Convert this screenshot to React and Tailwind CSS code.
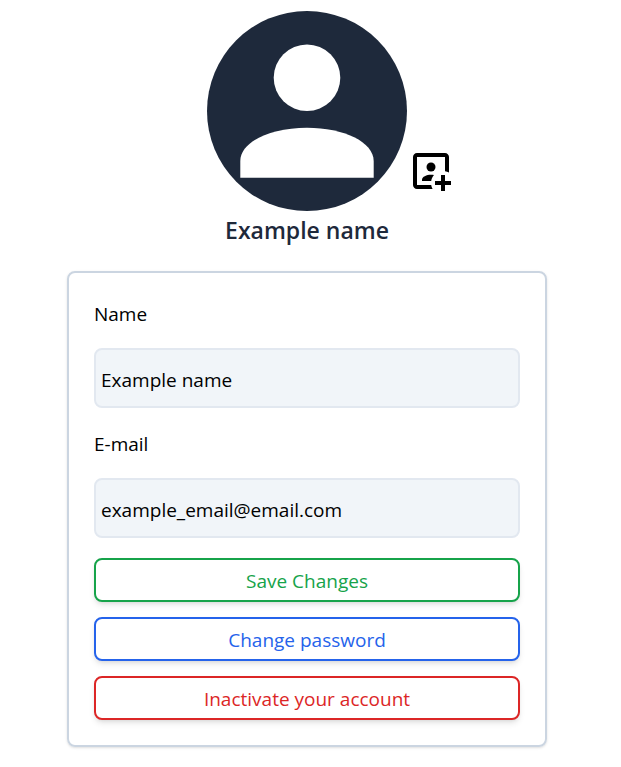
function Avatar() {
  return (
    <svg viewBox="0 0 200 200" className="block size-[200px]" role="img" aria-label="Profile picture">
      <circle cx="100" cy="100" r="100" fill="#1e293b" />
      <circle cx="100" cy="66.7" r="33.3" fill="#fff" />
      <path d="M33.3 166.7V150C33.3 131 63 116.7 100 116.7S166.7 131 166.7 150V166.7Z" fill="#fff" />
    </svg>
  );
}

function AddPhotoIcon() {
  return (
    <svg viewBox="0 0 24 24" className="block size-12" fill="currentColor" aria-hidden="true">
      <path d="M5 3h14c1.1 0 2 .9 2 2v7.8c-.6-.4-1.3-.6-2-.7V5H5v14h7.1c.1.7.3 1.4.7 2H5c-1.1 0-2-.9-2-2V5c0-1.1.9-2 2-2z" />
      <circle cx="12" cy="10" r="2.25" />
      <path d="M7.5 17v-.6c0-1.5 2.3-2.5 4.5-2.5.5 0 1 .05 1.5.15-.7.8-1.2 1.8-1.4 2.95z" />
      <path d="M17 14h2v3h3v2h-3v3h-2v-3h-3v-2h3z" />
    </svg>
  );
}

function Field({ id, label, type, value }) {
  return (
    <div className="flex flex-col gap-[18px]">
      <label htmlFor={id} className="leading-8 text-black">
        {label}
      </label>
      <input
        id={id}
        type={type}
        defaultValue={value}
        className="h-[60px] w-full rounded-lg border-2 border-[#e2e8f0] bg-[#f1f5f9] px-[5px] pt-1 text-black"
      />
    </div>
  );
}

function ActionButton({ className, children }) {
  return (
    <button
      type="button"
      className={`h-11 w-full rounded-lg border-2 bg-white pt-0.5 shadow-md ${className}`}
    >
      {children}
    </button>
  );
}

export default function App() {
  return (
    <main className="flex flex-col items-center bg-white pt-[11px] pr-[7px] pb-5 font-['Segoe_UI','Open_Sans',sans-serif] text-[19px]">
      <div className="relative">
        <Avatar />
        <button type="button" aria-label="Change photo" className="absolute bottom-4 left-full text-black">
          <AddPhotoIcon />
        </button>
      </div>
      <h1 className="text-[23px] leading-[38px] font-semibold text-[#1e293b]">Example name</h1>
      <form className="mt-[22px] flex w-full max-w-[480px] flex-col gap-5 rounded-lg border-2 border-[#cbd5e1] p-[25px] shadow-sm">
        <Field id="name" label="Name" type="text" value="Example name" />
        <Field id="email" label="E-mail" type="email" value="example_email@email.com" />
        <div className="flex flex-col gap-[15px]">
          <ActionButton className="border-[#16a34a] text-[#16a34a]">Save Changes</ActionButton>
          <ActionButton className="border-[#2563eb] text-[#2563eb]">Change password</ActionButton>
          <ActionButton className="border-[#dc2626] text-[#dc2626]">Inactivate your account</ActionButton>
        </div>
      </form>
    </main>
  );
}
